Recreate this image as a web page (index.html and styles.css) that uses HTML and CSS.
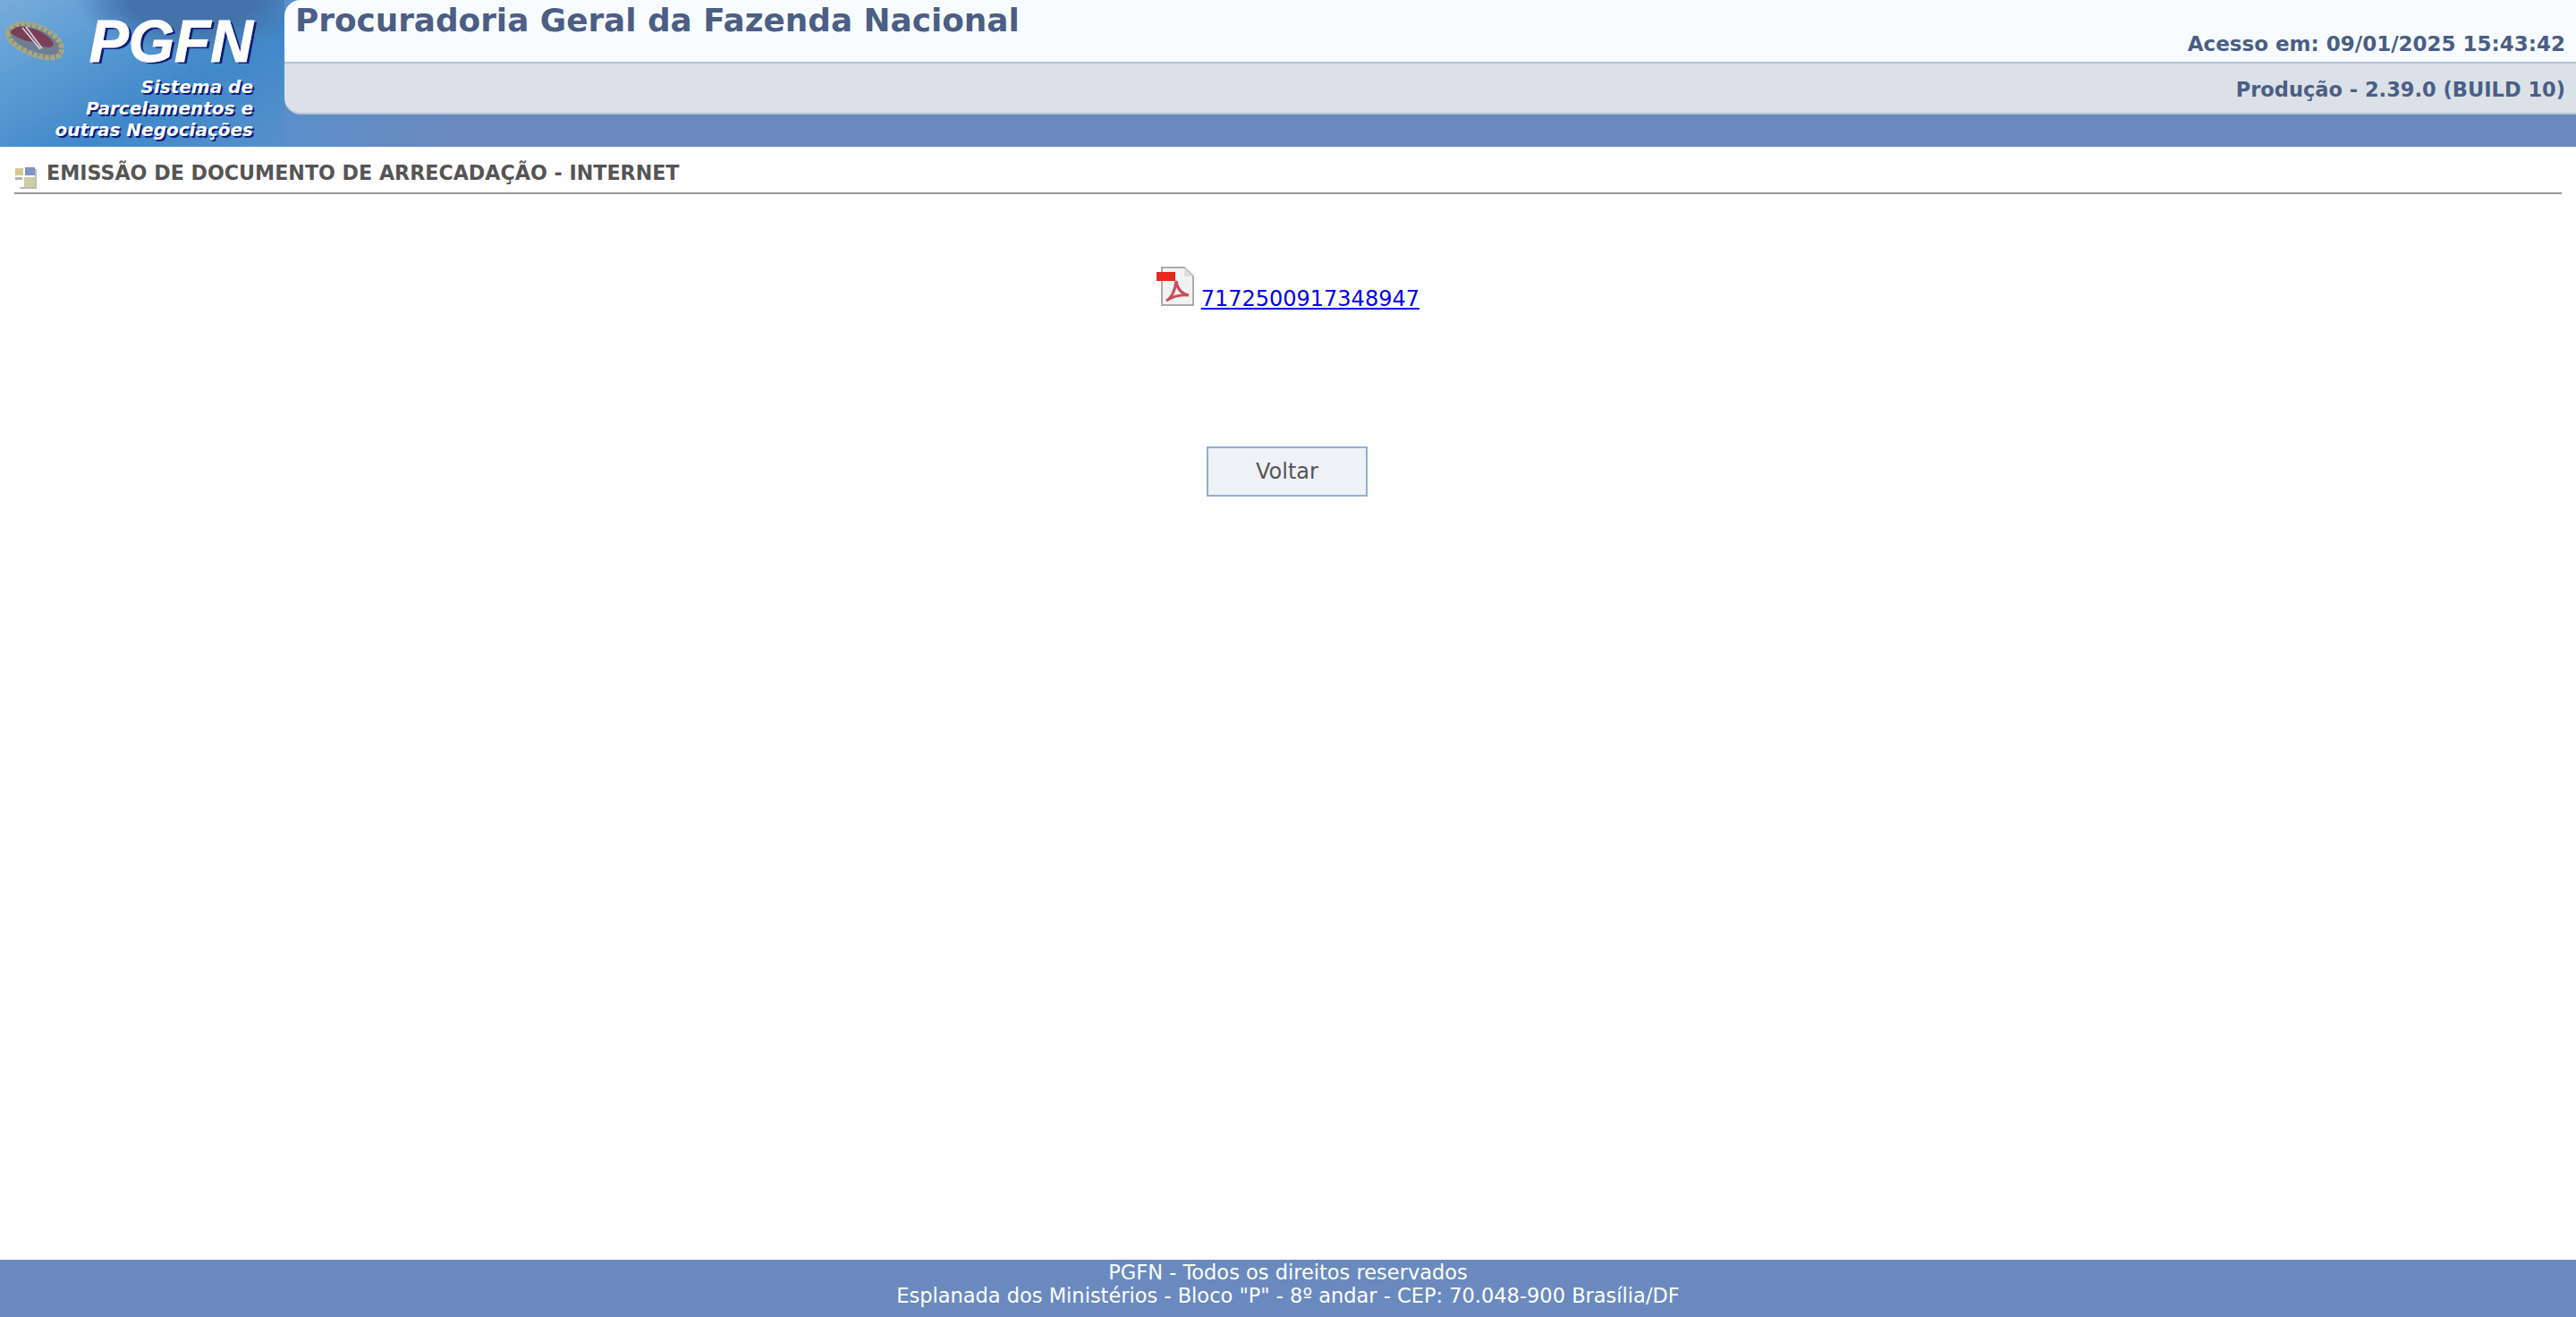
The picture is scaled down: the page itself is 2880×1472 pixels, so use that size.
FILE: index.html
```html
<!doctype html><html lang="pt-BR"><head>
<meta charset="UTF-8" />
<title>PGFN - Sistema de Parcelamentos</title>
<link rel="stylesheet" href="styles.css"></head><body>
<div class="head">
	<div class="logo">
		<svg class="emblem" viewBox="0 0 70 48">
			<path d="M5 16C6 7 16 3 27 5c14 2 30 10 36 20 4 8 2 16-6 17-12 2-26-3-38-10C11 27 5 22 5 16z" fill="#6f7f93" stroke="#a9a77c" stroke-width="6" stroke-dasharray="5 1.5" />
			<path d="M7 14c5-7 14-8 21-5 11 2 22 8 27 16 2 4-1 6-6 6-6-1-9-2-13-3-3-5-10-3-15-6-6-2-10-5-14-8z" fill="#7a3f58" />
			<path d="M25 8l18 24M21 9l20 24" stroke="#d5d8dc" stroke-width="1.6" fill="none" />
		</svg>
		<div class="brand">
			<div class="name">PGFN</div>
			<div class="sys">Sistema de<br />Parcelamentos e<br />outras Negociações</div>
		</div>
	</div>
	<div class="auto">
		<div class="top">
			<h1>Procuradoria Geral da Fazenda Nacional</h1>
			<b>Acesso em: 09/01/2025 15:43:42</b>
		</div>
		<div class="sub"><b>Produção - 2.39.0 (BUILD 10)</b></div>
	</div>
</div>
<div class="main">
	<div class="cap">
		<svg class="cap-ico" viewBox="0 0 26 26">
			<rect x="1" y="3" width="9" height="8" fill="#d6c98f" />
			<rect x="12" y="2" width="11" height="9" fill="#7d93c4" />
			<rect x="1" y="13" width="8" height="3" fill="#b4b4b4" />
			<rect x="11" y="13" width="12" height="11" fill="#cfcca6" />
			<path d="M24 4v21H6" fill="none" stroke="#bbb" stroke-width="2" />
		</svg>
		EMISSÃO DE DOCUMENTO DE ARRECADAÇÃO - INTERNET
	</div>
	<div class="doc">
		<svg class="pdf" viewBox="0 0 42 44">
			<path d="M6 1h25l10 10v32H6z" fill="#f2f2f2" stroke="#aaa" stroke-width="2" />
			<path d="M31 1v10h10z" fill="#dcdcdc" />
			<path d="M11 38c6-3 10-12 11-22 1 8 5 14 14 16-8-1-16 0-25 6z" fill="none" stroke="#cf4a5c" stroke-width="3" />
			<rect x="0" y="6" width="21" height="10" fill="#e8281f" />
		</svg>
		<a href="#">7172500917348947</a>
	</div>
	<div class="tc"><button class="btn" type="button">Voltar</button></div>
</div>
<div class="footer">
	PGFN - Todos os direitos reservados<br />
	Esplanada dos Ministérios - Bloco "P" - 8º andar - CEP: 70.048-900 Brasília/DF
</div>
</body></html>
```

FILE: styles.css
```css
body{ margin: 0; display: flex; flex-direction: column; height: 100vh; overflow: hidden; font: 24px/28px "DejaVu Sans", Verdana, sans-serif; color: #555; background: #fff }
.tc{ text-align: center }
.head{ display: flex; flex: none; height: 164px; background: linear-gradient(90deg, #5590cb 0, #5b8fca 318px, #6a8abf 500px, #6a8abf 100%) }
.head .auto{ flex: 1 }
.logo{ width: 318px; flex: none; box-sizing: border-box; display: flex; justify-content: space-between; padding: 16px 35px 0 0; background-image: radial-gradient(ellipse 130px 60px at 215px 0, #4473ab 55%, rgba(68,115,171,0) 100%), linear-gradient(150deg, #78acdb 0, #5a9bd3 30%, #4088c9 62%, #5790cb 100%) }
.emblem{ width: 70px; height: 48px; margin: 6px -70px 0 4px; flex: none; filter: blur(.7px) }
.brand{ flex: none; margin-left: auto; text-align: right; font-family: "Liberation Sans", Arial, sans-serif; font-style: italic; font-weight: 700; color: #fff }
.brand .name{ font-size: 66px; line-height: 60px; text-shadow: 3px 2px 0 #0c1a78; -webkit-text-stroke: 1px #fff }
.brand .sys{ font: italic 700 20px/24px "DejaVu Sans", Verdana, sans-serif; margin-top: 9px; text-shadow: 2px 2px 0 #0c1a78 }
.top{ height: 71px; box-sizing: border-box; background: #f8fcff; border-radius: 18px 0 0 0; border-bottom: 2px solid #b3c2d8; padding: 1px 12px 0; display: flex; justify-content: space-between; color: #4b5e84 }
.top h1{ margin: 0; font-size: 35.8px; line-height: 44px; font-weight: 700 }
.top b{ align-self: flex-end; font-size: 23px; line-height: 28px; margin-bottom: 6px }
.sub{ height: 57px; box-sizing: border-box; background: #dbe1e8; border-bottom: 2px solid #b3c2d8; border-radius: 0 0 0 18px; padding: 15px 12px 0; text-align: right; font-size: 22.5px; color: #4b5e84 }
.main{ flex: 1 }
.cap{ margin: 14px 16px 0; height: 37px; border-bottom: 2px solid #999; font-size: 22.2px; font-weight: 700; display: flex; gap: 10px; align-items: flex-start; line-height: 30px }
.cap-ico{ width: 26px; height: 26px; margin-top: 7px; flex: none }
.doc{ margin-top: 81px; text-align: center; line-height: 28px; height: 201px }
.pdf{ width: 42px; height: 44px; vertical-align: baseline }
.doc a{ color: #00e }
.btn{ width: 180px; height: 56px; margin-right: 2px; border: 2px solid #92aed6; background: #eef1f6; color: #555; font: 24px "DejaVu Sans", Verdana, sans-serif; padding: 0 }
.footer{ flex: none; height: 64px; box-sizing: border-box; padding-top: 1px; background: #6a8abf; color: #fff; text-align: center; font-size: 22.5px; line-height: 26px }
```
